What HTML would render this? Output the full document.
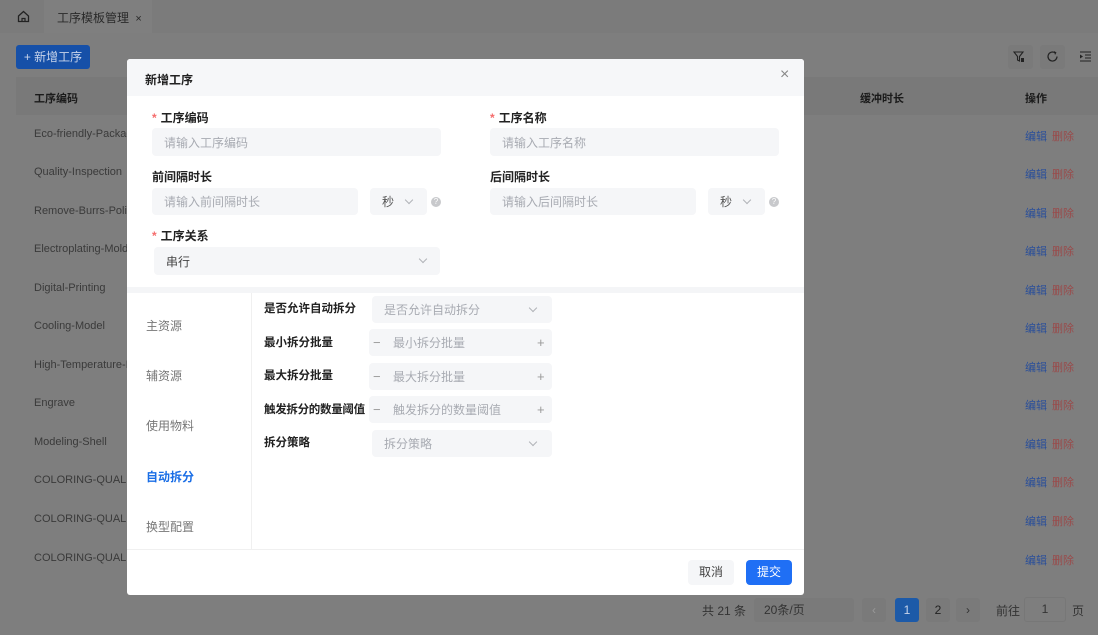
<!DOCTYPE html>
<html><head><meta charset="utf-8"><style>
*{margin:0;padding:0;box-sizing:border-box}
body{width:1098px;height:635px;overflow:hidden;background:#7e7e7e;font-family:"Liberation Sans","Noto Sans CJK SC",sans-serif;font-size:12px;color:#222;position:relative}
.a{position:absolute}
.row{position:absolute;left:34px;color:#3a3a3a;font-size:11px}
.ed{position:absolute;left:1025px;font-size:11px;color:#2a4f9a}
.dl{position:absolute;left:1052px;font-size:11px;color:#9a4a4a}
.inp{position:absolute;background:#f5f6f8;border-radius:4px;color:#a8abb2;font-size:12px;padding-left:12px;display:flex;align-items:center}
.lab{position:absolute;font-weight:bold;font-size:12px;color:#222;white-space:nowrap}
.star{color:#f56c6c;margin-right:4px}
.chev{position:absolute;width:6px;height:6px;border-right:1px solid #b0b3b8;border-bottom:1px solid #b0b3b8;transform:rotate(45deg)}
.q{position:absolute;width:10px;height:10px;border-radius:50%;background:#c8c9cc;color:#fff;font-size:8px;text-align:center;line-height:10px}
.side{position:absolute;left:146px;font-size:12px;color:#777}
.pm{position:absolute;color:#999;font-size:13px;line-height:14px}
</style></head><body>
<div class="a" style="left:0;top:0;width:1098px;height:33px;background:#7b7b7b"></div>
<svg class="a" style="left:17px;top:10px" width="13" height="13" viewBox="0 0 13 13"><path d="M1.5 6 L6.5 1.5 L11.5 6 V11.5 H1.5 Z" fill="none" stroke="#222" stroke-width="1.3"/><path d="M5 11.5 V8.5 H8 V11.5" fill="none" stroke="#222" stroke-width="1.2"/></svg>
<div class="a" style="left:44px;top:0;width:108px;height:33px;background:#7f7f7f"></div>
<div class="a" style="left:57px;top:9px;font-size:12px;color:#2a2a2a">工序模板管理 <span style="font-size:11px;margin-left:3px">×</span></div>
<div class="a" style="left:16px;top:45px;width:74px;height:24px;background:#1650a8;border-radius:3px;color:#c8d4ea;font-size:12px;line-height:24px;text-align:center">+ 新增工序</div>
<div class="a" style="left:1008px;top:45px;width:25px;height:24px;background:#7a7a7a;border-radius:3px"></div>
<div class="a" style="left:1040px;top:45px;width:25px;height:24px;background:#7a7a7a;border-radius:3px"></div>
<svg class="a" style="left:1013px;top:51px" width="13" height="12" viewBox="0 0 13 12"><path d="M1 1 H10 L6.5 5.5 V10 L4.5 9 V5.5 Z" fill="none" stroke="#222" stroke-width="1.1"/><rect x="8" y="7" width="3" height="4" fill="#222"/></svg>
<svg class="a" style="left:1046px;top:50px" width="13" height="13" viewBox="0 0 13 13"><path d="M11 6.5 A4.5 4.5 0 1 1 9 2.8" fill="none" stroke="#222" stroke-width="1.2"/><path d="M8 1 L10.5 2.5 L9 5" fill="#222"/></svg>
<svg class="a" style="left:1079px;top:51px" width="13" height="11" viewBox="0 0 13 11"><path d="M1 1 H12 M6 4 H12 M6 7 H12 M1 10 H12" stroke="#222" stroke-width="1.1"/><path d="M1 3.5 L4 5.5 L1 7.5 Z" fill="#222"/></svg>
<div class="a" style="left:16px;top:77px;width:1082px;height:38px;background:#797979"></div>
<div class="a" style="left:34px;top:90px;font-size:11px;font-weight:bold;color:#1a1a1a">工序编码</div>
<div class="a" style="left:860px;top:90px;font-size:11px;font-weight:bold;color:#1a1a1a">缓冲时长</div>
<div class="a" style="left:1025px;top:90px;font-size:11px;font-weight:bold;color:#1a1a1a">操作</div>
<div class="row" style="top:128px">Eco-friendly-Packaging</div>
<div class="row" style="top:166px">Quality-Inspection</div>
<div class="row" style="top:205px">Remove-Burrs-Polish</div>
<div class="row" style="top:243px">Electroplating-Mold</div>
<div class="row" style="top:282px">Digital-Printing</div>
<div class="row" style="top:320px">Cooling-Model</div>
<div class="row" style="top:359px">High-Temperature-M</div>
<div class="row" style="top:397px">Engrave</div>
<div class="row" style="top:436px">Modeling-Shell</div>
<div class="row" style="top:474px">COLORING-QUALITY</div>
<div class="row" style="top:513px">COLORING-QUALITY</div>
<div class="row" style="top:552px">COLORING-QUALITY</div>
<div class="ed" style="top:128px">编辑</div><div class="dl" style="top:128px">删除</div>
<div class="ed" style="top:166px">编辑</div><div class="dl" style="top:166px">删除</div>
<div class="ed" style="top:205px">编辑</div><div class="dl" style="top:205px">删除</div>
<div class="ed" style="top:243px">编辑</div><div class="dl" style="top:243px">删除</div>
<div class="ed" style="top:282px">编辑</div><div class="dl" style="top:282px">删除</div>
<div class="ed" style="top:320px">编辑</div><div class="dl" style="top:320px">删除</div>
<div class="ed" style="top:359px">编辑</div><div class="dl" style="top:359px">删除</div>
<div class="ed" style="top:397px">编辑</div><div class="dl" style="top:397px">删除</div>
<div class="ed" style="top:436px">编辑</div><div class="dl" style="top:436px">删除</div>
<div class="ed" style="top:474px">编辑</div><div class="dl" style="top:474px">删除</div>
<div class="ed" style="top:513px">编辑</div><div class="dl" style="top:513px">删除</div>
<div class="ed" style="top:552px">编辑</div><div class="dl" style="top:552px">删除</div>
<div class="a" style="left:702px;top:602px;font-size:12px;color:#333">共 21 条</div>
<div class="a" style="left:754px;top:598px;width:100px;height:24px;background:#7a7a7a;border-radius:3px;color:#333;padding-left:10px;line-height:24px">20条/页</div>
<div class="a" style="left:862px;top:598px;width:24px;height:24px;background:#7a7a7a;border-radius:3px;color:#999;text-align:center;line-height:24px">‹</div>
<div class="a" style="left:895px;top:598px;width:24px;height:24px;background:#1d5aa8;border-radius:3px;color:#c8d4ea;text-align:center;line-height:24px">1</div>
<div class="a" style="left:926px;top:598px;width:24px;height:24px;background:#7a7a7a;border-radius:3px;color:#222;text-align:center;line-height:24px">2</div>
<div class="a" style="left:956px;top:598px;width:24px;height:24px;background:#7a7a7a;border-radius:3px;color:#333;text-align:center;line-height:24px">›</div>
<div class="a" style="left:996px;top:602px;color:#333">前往</div>
<div class="a" style="left:1024px;top:597px;width:42px;height:25px;border:1px solid #777;border-radius:3px;color:#333;text-align:center;line-height:23px">1</div>
<div class="a" style="left:1072px;top:602px;color:#333">页</div>

<div class="a" style="left:127px;top:59px;width:677px;height:536px;background:#fff;border-radius:3px;overflow:hidden">
 <div class="a" style="left:0;top:0;width:677px;height:37px;background:#f6f7f9"></div>
 <div class="a" style="left:18px;top:12px;font-size:12px;font-weight:bold;color:#222">新增工序</div>
 <div class="a" style="left:653px;top:7px;font-size:16px;color:#888">×</div>
 <div class="lab" style="left:25px;top:50px"><span class="star">*</span>工序编码</div>
 <div class="inp" style="left:25px;top:69px;width:289px;height:28px">请输入工序编码</div>
 <div class="lab" style="left:363px;top:50px"><span class="star">*</span>工序名称</div>
 <div class="inp" style="left:363px;top:69px;width:289px;height:28px">请输入工序名称</div>
 <div class="lab" style="left:25px;top:109px">前间隔时长</div>
 <div class="inp" style="left:25px;top:129px;width:206px;height:27px">请输入前间隔时长</div>
 <div class="inp" style="left:243px;top:129px;width:57px;height:27px;color:#555">秒</div>
 <div class="chev" style="left:279px;top:138px"></div>
 <div class="q" style="left:304px;top:138px">?</div>
 <div class="lab" style="left:363px;top:109px">后间隔时长</div>
 <div class="inp" style="left:363px;top:129px;width:206px;height:27px">请输入后间隔时长</div>
 <div class="inp" style="left:581px;top:129px;width:57px;height:27px;color:#555">秒</div>
 <div class="chev" style="left:617px;top:138px"></div>
 <div class="q" style="left:642px;top:138px">?</div>
 <div class="lab" style="left:25px;top:168px"><span class="star">*</span>工序关系</div>
 <div class="inp" style="left:27px;top:188px;width:286px;height:28px;color:#444">串行</div>
 <div class="chev" style="left:293px;top:197px"></div>
 <div class="a" style="left:0;top:228px;width:677px;height:6px;background:#f4f5f7"></div>
 <div class="a" style="left:124px;top:234px;width:1px;height:256px;background:#f0f0f0"></div>
 <div class="side" style="left:19px;top:258px">主资源</div>
 <div class="side" style="left:19px;top:308px">辅资源</div>
 <div class="side" style="left:19px;top:358px">使用物料</div>
 <div class="side" style="left:19px;top:409px;color:#1a6ee6;font-weight:bold">自动拆分</div>
 <div class="side" style="left:19px;top:459px">换型配置</div>
 <div class="lab" style="left:137px;top:241px;font-size:11.5px">是否允许自动拆分</div>
 <div class="inp" style="left:245px;top:237px;width:180px;height:27px">是否允许自动拆分</div>
 <div class="chev" style="left:403px;top:246px"></div>
 <div class="lab" style="left:137px;top:275px;font-size:11.5px">最小拆分批量</div>
 <div class="inp" style="left:242px;top:270px;width:183px;height:27px;padding-left:24px">最小拆分批量</div>
 <div class="pm" style="left:246px;top:277px">−</div><div class="pm" style="left:410px;top:277px">+</div>
 <div class="lab" style="left:137px;top:308px;font-size:11.5px">最大拆分批量</div>
 <div class="inp" style="left:242px;top:304px;width:183px;height:27px;padding-left:24px">最大拆分批量</div>
 <div class="pm" style="left:246px;top:311px">−</div><div class="pm" style="left:410px;top:311px">+</div>
 <div class="lab" style="left:137px;top:342px;font-size:11.5px;letter-spacing:-0.3px">触发拆分的数量阈值</div>
 <div class="inp" style="left:242px;top:337px;width:183px;height:27px;padding-left:24px">触发拆分的数量阈值</div>
 <div class="pm" style="left:246px;top:344px">−</div><div class="pm" style="left:410px;top:344px">+</div>
 <div class="lab" style="left:137px;top:375px;font-size:11.5px">拆分策略</div>
 <div class="inp" style="left:245px;top:371px;width:180px;height:27px">拆分策略</div>
 <div class="chev" style="left:403px;top:380px"></div>
 <div class="a" style="left:0;top:490px;width:677px;height:1px;background:#f0f0f0"></div>
 <div class="a" style="left:561px;top:501px;width:46px;height:25px;background:#f5f6f8;border-radius:4px;color:#444;text-align:center;line-height:25px">取消</div>
 <div class="a" style="left:619px;top:501px;width:46px;height:25px;background:#1f6ff5;border-radius:4px;color:#fff;text-align:center;line-height:25px">提交</div>
</div>
</body></html>
